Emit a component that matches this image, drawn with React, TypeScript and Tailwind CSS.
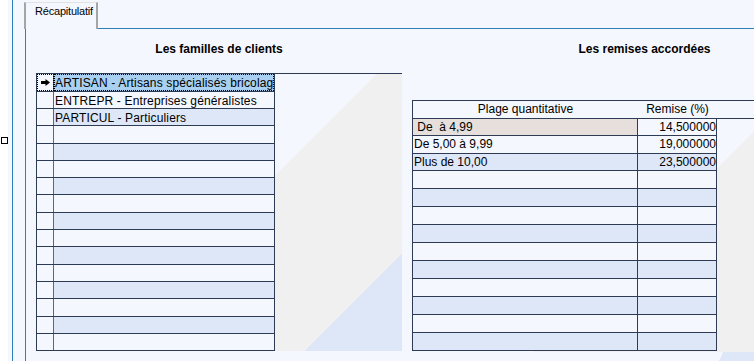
import React from 'react';

const familles = [
    'ARTISAN - Artisans spécialisés bricolage',
    'ENTREPR - Entreprises généralistes',
    'PARTICUL - Particuliers',
];

const remises = [
    { plage: ' De  à 4,99', taux: '14,500000' },
    { plage: 'De 5,00 à 9,99', taux: '19,000000' },
    { plage: 'Plus de 10,00', taux: '23,500000' },
];

// hauteurs des lignes (bordure basse comprise)
const leftHeights = [18, 17, 17, 18, 17, 17, 17, 18, 17, 17, 18, 17, 17, 18, 17, 17];
const rightHeights = [17, 18, 17, 18, 18, 18, 18, 18, 18, 18, 18, 18, 18];

const RowArrow = () => (
    <svg width="9" height="7" viewBox="0 0 9 7">
        <path d="M0 2H4.5V0L9 3.5L4.5 7V5H0Z" fill="#000" />
    </svg>
);

const FamillesGrid: React.FC = () => (
    <div className="h-[278px] border-t border-[#2e3b55] bg-[linear-gradient(135deg,#f5f7fe_241px,#f0f0f0_241px,#f0f0f0_386px,#dde7f7_386px)]">
        <div className="w-[239px] border-x border-[#2e3b55]">
            {leftHeights.map((h, i) => {
                const selected = i === 0;
                const rowBg = selected ? 'bg-[#a9d0f0]' : i % 2 === 0 ? 'bg-[#dde7f7]' : 'bg-[#f5f7fe]';
                return (
                    <div key={i} className={`flex border-b border-[#2e3b55] ${h === 18 ? 'h-[18px]' : 'h-[17px]'}`}>
                        <div
                            className={`w-[17px] shrink-0 border-r border-[#3a70a6] bg-[#f5f7fe] flex items-center justify-center ${selected ? 'outline-1 outline-dotted outline-black -outline-offset-1' : ''}`}
                        >
                            {selected && <RowArrow />}
                        </div>
                        <div
                            className={`flex-1 min-w-0 overflow-hidden whitespace-nowrap pl-[1px] pt-[2px] text-[12px] leading-[14px] tracking-[0.15px] ${rowBg} ${selected ? 'outline-1 outline-dotted outline-black -outline-offset-1' : ''}`}
                        >
                            {familles[i] ?? ''}
                        </div>
                    </div>
                );
            })}
        </div>
    </div>
);

const RemisesGrid: React.FC = () => (
    <div className="flex flex-col">
        <div className="h-[19px] flex border-y border-l border-[#2e3b55] bg-[#f5f7fe] text-[12px] leading-[15px]">
            <div className="w-[225px] text-center pt-[1px]">Plage quantitative</div>
            <div className="w-[79px] text-center pt-[1px]">Remise (%)</div>
        </div>
        <div className="h-[233px] bg-[linear-gradient(135deg,#f5f7fe_251px,#f0f0f0_251px,#f0f0f0_423px,#dde7f7_423px)]">
            <div className="w-[305px] border-l border-[#2e3b55]">
                {rightHeights.map((h, i) => {
                    const r = remises[i];
                    const stripe = i % 2 === 0 ? 'bg-[#dde7f7]' : 'bg-[#f5f7fe]';
                    return (
                        <div
                            key={i}
                            className={`flex border-b border-[#2e3b55] text-[12px] leading-[15px] ${h === 18 ? 'h-[18px]' : 'h-[17px]'}`}
                        >
                            <div
                                className={`w-[225px] shrink-0 border-r border-[#2e3b55] pl-[1px] pt-[1px] whitespace-pre overflow-hidden ${i === 0 ? 'bg-[#e6dfdc]' : stripe}`}
                            >
                                {r?.plage ?? ''}
                            </div>
                            <div
                                className={`w-[79px] shrink-0 border-r border-[#2e3b55] pt-[1px] text-right ${i === 0 ? 'bg-[#f5f7fe]' : stripe}`}
                            >
                                {r?.taux ?? ''}
                            </div>
                        </div>
                    );
                })}
            </div>
        </div>
        <div className="h-[9px] bg-[linear-gradient(115deg,#f5f7fe_282px,#dde7f7_282px)]" />
    </div>
);

export default function App() {
    return (
        <div className="w-[754px] h-[361px] overflow-hidden flex bg-[#f5f7fe] text-black font-['Liberation_Sans',Arial,sans-serif]">
            <div className="w-[8px] shrink-0 bg-white pt-[137px] pl-[1px]">
                <div className="w-[7px] h-[7px] border border-black" />
            </div>
            <div className="w-[4px] shrink-0" />
            <div className="w-[12px] shrink-0 border-l border-[#2f7fb8]" />

            <div className="flex-1 min-w-0 flex flex-col">
                {/* onglets */}
                <div className="h-[29px] shrink-0 flex">
                    <div className="w-[74px] mt-[2px] border-x-2 border-t border-x-[#a5a5a5] border-t-[#e2e2e2] pl-[9px] pt-[2px] text-[11px] leading-[13px] tracking-[-0.2px]">
                        Récapitulatif
                    </div>
                    <div className="flex-1 border-b border-[#2f7fb8]" />
                </div>

                {/* page Récapitulatif */}
                <div className="flex-1 flex ml-[1px] border-l border-[#2f7fb8] pl-[10px] gap-[10px]">
                    <div className="w-[366px] shrink-0 flex flex-col">
                        <div className="h-[44px] pt-[13px] text-center text-[12px] leading-[14px] font-bold">
                            Les familles de clients
                        </div>
                        <FamillesGrid />
                    </div>
                    <div className="w-[465px] shrink-0 flex flex-col">
                        <div className="h-[44px] pt-[13px] text-center text-[12px] leading-[14px] font-bold">
                            Les remises accordées
                        </div>
                        <div className="h-[27px]" />
                        <RemisesGrid />
                    </div>
                </div>
            </div>
        </div>
    );
}
